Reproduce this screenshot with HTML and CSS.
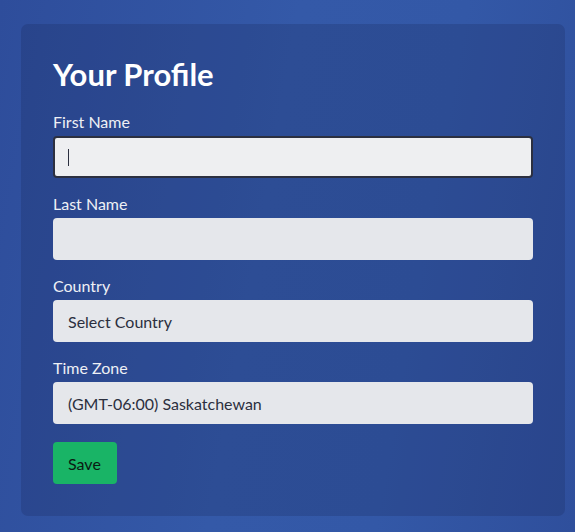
FILE: index.html
```html
<!DOCTYPE html>
<html lang="en">
<head>
<meta charset="utf-8">
<title>Your Profile</title>
<link rel="stylesheet" href="styles.css">
</head>
<body>
  <main class="page">
    <form class="card">
      <h1 class="title">Your Profile</h1>
      <div class="group">
        <label class="label">First Name</label>
        <div class="field field--focus"><span class="caret"></span></div>
      </div>
      <div class="group">
        <label class="label">Last Name</label>
        <div class="field"></div>
      </div>
      <div class="group">
        <label class="label">Country</label>
        <div class="field">Select Country</div>
      </div>
      <div class="group">
        <label class="label">Time Zone</label>
        <div class="field">(GMT-06:00) Saskatchewan</div>
      </div>
      <button type="button" class="btn">Save</button>
    </form>
  </main>
</body>
</html>
```

FILE: styles.css
```css
html, body {
  margin: 0;
  height: 100%;
}
body {
  font-family: Lato, "Open Sans", sans-serif;
  background: linear-gradient(100deg, #2e4d9b 0%, #3459a8 45%, #3358a7 70%, #2f4f9c 100%);
  color: #ffffff;
}
.page {
  padding: 24px 10px 15px 21px;
  box-sizing: border-box;
}
.card {
  width: 544px;
  box-sizing: border-box;
  padding: 32px;
  background: rgba(20, 30, 75, 0.2);
  border-radius: 7px;
  display: flex;
  flex-direction: column;
  align-items: flex-start;
}
.title {
  margin: 0 0 20px;
  font-size: 31px;
  line-height: 36px;
  font-weight: 700;
  color: #ffffff;
}
.group {
  width: 100%;
  margin-bottom: 16px;
  display: flex;
  flex-direction: column;
}
.label {
  font-size: 16px;
  line-height: 20px;
  margin-bottom: 4px;
  color: #eef0f5;
}
.field {
  height: 42px;
  box-sizing: border-box;
  background: #e5e7eb;
  border-radius: 4px;
  padding: 0 15px;
  display: flex;
  align-items: center;
  font-size: 16px;
  color: #2b2f3e;
}
.field--focus {
  background: #eeeff1;
  border: 2px solid #2c3040;
  padding: 0 13px;
}
.caret {
  width: 1px;
  height: 17px;
  background: #2c3040;
}
.btn {
  font-family: inherit;
  font-size: 16px;
  color: #0b1a12;
  background: #19b466;
  border: none;
  border-radius: 4px;
  height: 42px;
  margin-top: 2px;
  padding: 0 16px 0 15px;
  cursor: pointer;
}
```
